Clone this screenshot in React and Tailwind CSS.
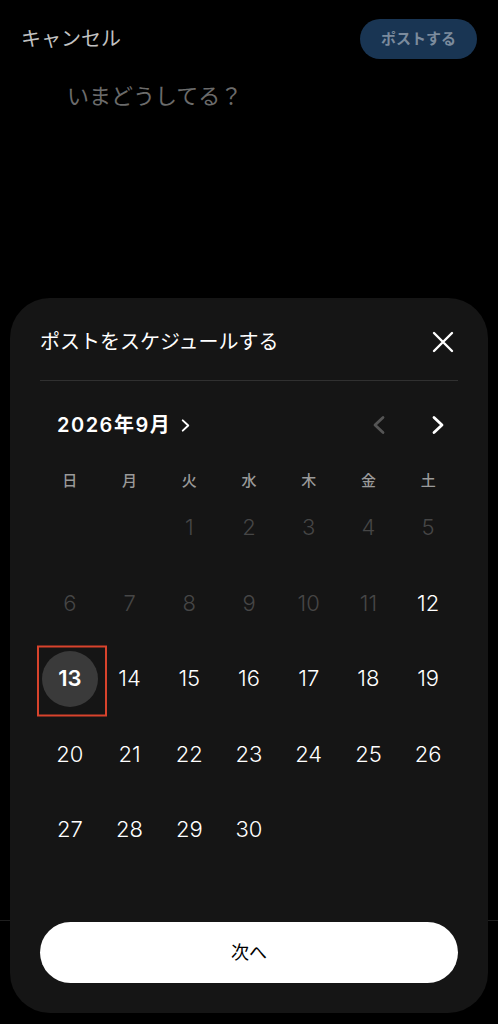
import React from 'react';

const font = { fontFamily: 'Inter, "Noto Sans CJK JP", sans-serif' };

const weekdays = ['日', '月', '火', '水', '木', '金', '土'];

// September 2026 starts on Tuesday
const cells = [
  null, null,
  ...Array.from({ length: 30 }, (_, i) => i + 1),
];

function Chevron({ dir = 'right', className = '' }) {
  return (
    <svg viewBox="0 0 16 20" className={className} fill="none" stroke="currentColor" strokeWidth="2.8" strokeLinecap="round" strokeLinejoin="round">
      {dir === 'right' ? <path d="M4 2.5 L12 10 L4 17.5" /> : <path d="M12 2.5 L4 10 L12 17.5" />}
    </svg>
  );
}

function DayCell({ day }) {
  if (!day) return <div className="h-[75.5px]" />;
  const disabled = day < 12;
  const selected = day === 13;
  return (
    <div className="h-[75.5px] flex items-center justify-center relative">
      {selected ? (
        <>
          <div className="w-14 h-14 rounded-full bg-[#3a3a3a] flex items-center justify-center text-[22px] font-semibold text-white">
            {day}
          </div>
          <div className="absolute left-1/2 top-1/2 -translate-x-1/2 -translate-y-1/2 ml-[2px] mt-[2px] w-[70px] h-[71px] border-2 border-[#d8432c]" />
        </>
      ) : (
        <span className={`text-[22px] font-light ${disabled ? 'text-[#464646]' : 'text-white'}`}>{day}</span>
      )}
    </div>
  );
}

export default function App() {
  return (
    <div className="relative w-full h-[1024px] bg-black overflow-hidden flex flex-col" style={font}>
      {/* Compose screen underneath */}
      <div className="flex items-center justify-between pt-[19px] pl-[21px] pr-[21px]">
        <span className="text-[20px] text-[#c2c2c2]">キャンセル</span>
        <button className="h-10 px-[21px] rounded-full bg-[#193553] text-[15px] font-bold text-[#7b8b9d]">
          ポストする
        </button>
      </div>
      <p className="mt-[22px] pl-[67px] text-[22px] leading-[30px] text-[#6b6b6b]">いまどうしてる？</p>
      <div className="flex-1" />
      <div className="h-[104px] border-t border-[#1e1e1e]" />

      {/* Schedule sheet */}
      <div className="absolute left-[10px] right-[10px] top-[298px] bottom-[11px] rounded-[40px] bg-[#151515] px-[30px] pb-[30px] flex flex-col">
        <div className="flex items-center justify-between pt-[30px] h-[58px]">
          <h2 className="text-[20px] leading-[28px] text-white">ポストをスケジュールする</h2>
          <svg viewBox="0 0 22 22" className="w-[22px] h-[22px] mr-[4px] text-white" fill="none" stroke="currentColor" strokeWidth="2.4" strokeLinecap="round">
            <path d="M2 2 L20 20 M20 2 L2 20" />
          </svg>
        </div>
        <div className="mt-[24px] h-px bg-[#303030]" />

        <div className="mt-[30px] h-[28px] flex items-center justify-between">
          <div className="flex items-center pl-[17px] gap-[9px] text-white">
            <span className="text-[20px] font-semibold tracking-[1.5px]">2026年9月</span>
            <Chevron className="w-[11px] h-[15px]" />
          </div>
          <div className="flex items-center gap-[43px] pr-[12px]">
            <Chevron dir="left" className="w-[16px] h-[20px] text-[#555555]" />
            <Chevron className="w-[16px] h-[20px] text-white" />
          </div>
        </div>

        <div className="mt-[31px] grid grid-cols-7 h-[20px] items-center">
          {weekdays.map(w => (
            <span key={w} className="text-center text-[15px] font-medium text-[#9a9a9a]">{w}</span>
          ))}
        </div>

        <div className="grid grid-cols-7">
          {cells.map((d, i) => (
            <DayCell key={i} day={d} />
          ))}
        </div>

        <button className="mt-auto h-[61px] w-full rounded-full bg-white text-[18px] text-black">
          次へ
        </button>
      </div>
    </div>
  );
}
